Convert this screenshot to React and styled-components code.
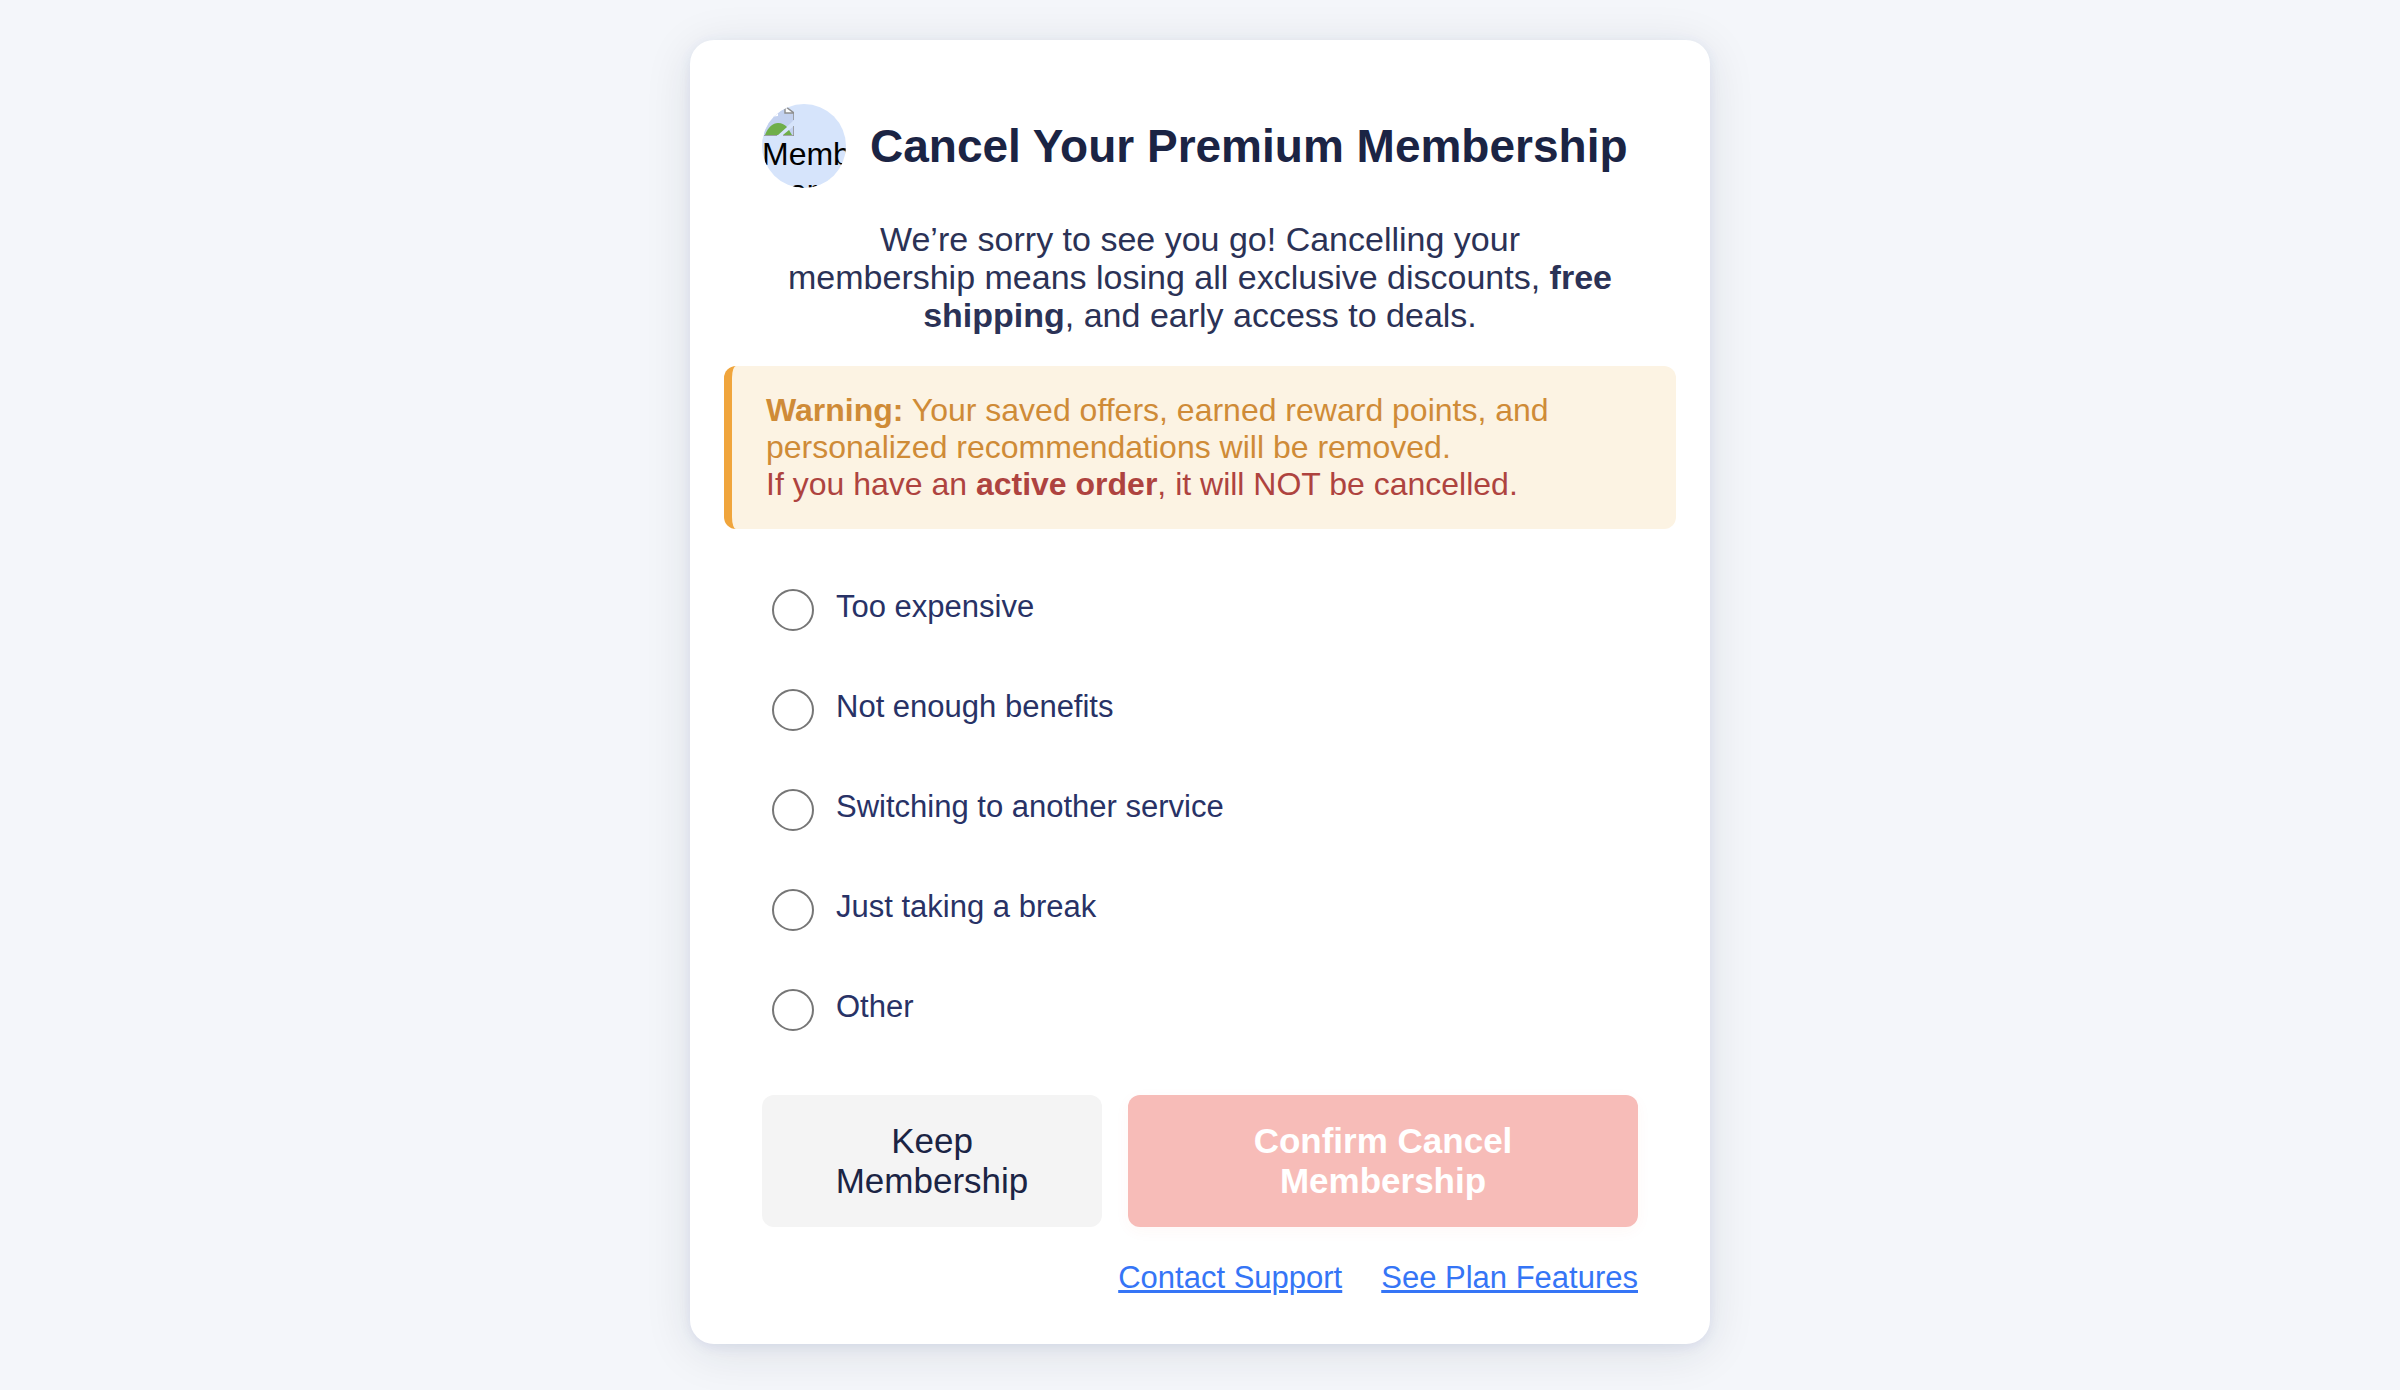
import React from "react";
import styled, { createGlobalStyle } from "styled-components";

const GlobalStyle = createGlobalStyle`
  *, *::before, *::after { box-sizing: border-box; }
  body {
    margin: 0;
    background: #f4f6fa;
    font-family: "Liberation Sans", Arial, sans-serif;
    font-size: 32px;
  }
`;

const Page = styled.main`
  display: flex;
  justify-content: center;
  align-items: flex-start;
  min-height: 100vh;
  padding: 40px 24px;
`;

const Card = styled.form`
  display: flex;
  flex-direction: column;
  width: 100%;
  max-width: 1020px;
  padding: 64px 72px 47px;
  border-radius: 24px;
  background: #fff;
  box-shadow: 0 8px 48px rgba(30, 34, 50, 0.11), 0 3px 12px rgba(60, 90, 200, 0.09);
`;

const Header = styled.header`
  display: flex;
  align-items: center;
  gap: 24px;
`;

const Avatar = styled.span`
  flex: none;
  display: flex;
  flex-direction: column;
  width: 84px;
  height: 84px;
  overflow: hidden;
  border-radius: 50%;
  background: #d6e4fb;
  color: #000;
  line-height: 37px;
  text-align: center;
`;

const BrokenIcon = styled.svg`
  flex: none;
  width: 32px;
  height: 32px;
`;

const Title = styled.h1`
  margin: 0;
  color: #1b2444;
  font-size: 46px;
  line-height: 54px;
`;

const Intro = styled.p`
  margin: 32px 0 0;
  padding: 0 22px;
  color: #2b3256;
  font-size: 34px;
  line-height: 38px;
  text-align: center;
`;

const Warning = styled.section`
  margin: 32px -38px 0;
  padding: 26px 34px;
  border-left: 8px solid #f0a53c;
  border-radius: 12px;
  background: #fcf3e3;
  color: #cf8b37;
  font-size: 32px;
  line-height: 37px;
`;

const Alert = styled.span`
  display: block;
  color: #ae433f;
`;

const Reasons = styled.fieldset`
  display: flex;
  flex-direction: column;
  gap: 58px;
  margin: 60px 0 0;
  padding: 0 10px;
  border: 0;
`;

const Reason = styled.label`
  display: flex;
  align-items: flex-start;
  gap: 22px;
  color: #283266;
  font-size: 31px;
  line-height: 36px;
`;

const Radio = styled.input`
  appearance: none;
  flex: none;
  width: 42px;
  height: 42px;
  margin: 0;
  border: 2px solid #767676;
  border-radius: 50%;
  background: #fff;

  &:checked {
    border: 12px solid #3575f6;
  }
`;

const Actions = styled.div`
  display: grid;
  grid-template-columns: 2fr 3fr;
  gap: 26px;
  margin-top: 64px;
`;

const Button = styled.button`
  padding: 26px 48px;
  border: 0;
  border-radius: 12px;
  background: ${(p) => (p.$danger ? "#f7bcb8" : "#f4f4f4")};
  color: ${(p) => (p.$danger ? "#fff" : "#1b2444")};
  box-shadow: ${(p) => (p.$danger ? "0 4px 16px rgba(230, 70, 60, 0.04)" : "none")};
  font-family: inherit;
  font-size: 35px;
  font-weight: ${(p) => (p.$danger ? 700 : 400)};
  line-height: 40px;
`;

const Links = styled.nav`
  display: flex;
  justify-content: flex-end;
  gap: 39px;
  margin-top: 32px;
`;

const Link = styled.a`
  color: #3575f6;
  font-size: 31px;
  line-height: 38px;
  text-decoration-thickness: 3px;
`;

const reasons = [
  "Too expensive",
  "Not enough benefits",
  "Switching to another service",
  "Just taking a break",
  "Other",
];

export default function App() {
  return (
    <>
      <GlobalStyle />
      <Page>
        <Card>
          <Header>
            <Avatar>
              <BrokenIcon viewBox="0 0 32 32" aria-hidden="true">
                <path d="M2 2H23V9H32V16L15 32H2Z" fill="#c3d1ef" />
                <path d="M8 13C8 10 11 10 12 9C13 7 16 8 16 10V12Z" fill="#fff" />
                <path d="M3 31C6 23 11 19 16 19C20 19 23 21 25 23L16 31Z" fill="#6fae4a" />
                <path d="M32 22V31H21Z" fill="#c3d1ef" />
                <path d="M21 31L27 26L30 31Z" fill="#6fae4a" />
                <path d="M23 3V9H31Z" fill="#fff" />
                <path
                  d="M23 3V9H32M24 3L32 9V16M32 22V32H21M15 32H2"
                  fill="none"
                  stroke="#8f8f8f"
                  strokeWidth="1.5"
                />
              </BrokenIcon>
              Membership card
            </Avatar>
            <Title>Cancel Your Premium Membership</Title>
          </Header>
          <Intro>
            We’re sorry to see you go! Cancelling your membership means losing
            all exclusive discounts, <strong>free shipping</strong>, and early
            access to deals.
          </Intro>
          <Warning>
            <strong>Warning:</strong> Your saved offers, earned reward points,
            and personalized recommendations will be removed.
            <Alert>
              If you have an <strong>active order</strong>, it will NOT be
              cancelled.
            </Alert>
          </Warning>
          <Reasons aria-label="Reason for cancelling">
            {reasons.map((reason) => (
              <Reason key={reason}>
                <Radio type="radio" name="reason" value={reason} />
                {reason}
              </Reason>
            ))}
          </Reasons>
          <Actions>
            <Button type="button">Keep Membership</Button>
            <Button type="submit" $danger disabled>
              Confirm Cancel Membership
            </Button>
          </Actions>
          <Links>
            <Link href="#support">Contact Support</Link>
            <Link href="#features">See Plan Features</Link>
          </Links>
        </Card>
      </Page>
    </>
  );
}
